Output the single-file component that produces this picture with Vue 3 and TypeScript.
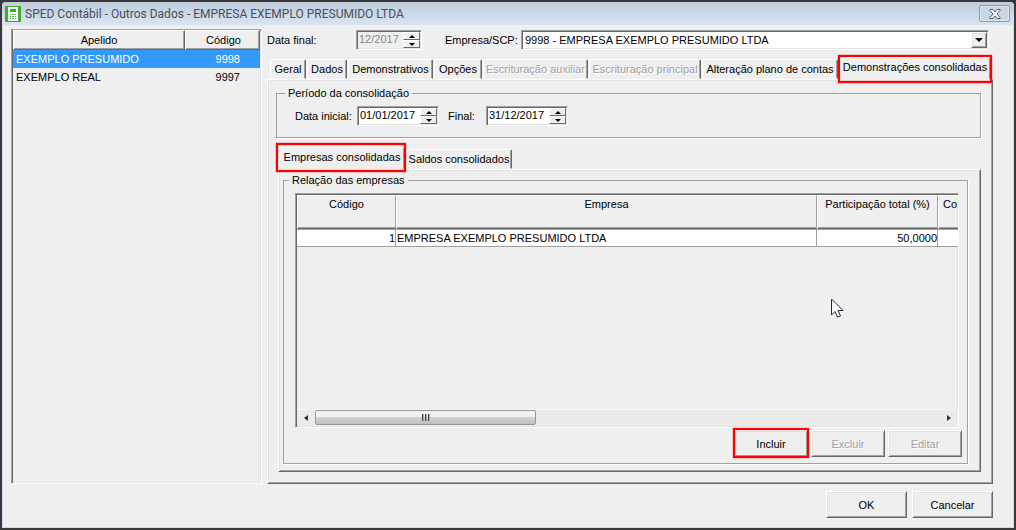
<script setup lang="ts">
import { ref } from 'vue'

interface Company { alias: string; code: number }
interface Tab { id: string; label: string; disabled?: boolean }

const companies: Company[] = [
  { alias: 'EXEMPLO PRESUMIDO', code: 9998 },
  { alias: 'EXEMPLO REAL', code: 9997 },
]
const selected = ref(9998)

const tabs: Tab[] = [
  { id: 'geral', label: 'Geral' },
  { id: 'dados', label: 'Dados' },
  { id: 'demonstrativos', label: 'Demonstrativos' },
  { id: 'opcoes', label: 'Opções' },
  { id: 'auxiliar', label: 'Escrituração auxiliar', disabled: true },
  { id: 'principal', label: 'Escrituração principal', disabled: true },
  { id: 'plano', label: 'Alteração plano de contas' },
  { id: 'consolidadas', label: 'Demonstrações consolidadas' },
]
const activeTab = ref('consolidadas')

const subTabs: Tab[] = [
  { id: 'empresas', label: 'Empresas consolidadas' },
  { id: 'saldos', label: 'Saldos consolidados' },
]
const activeSubTab = ref('empresas')

const finalMonth = ref('12/2017')
const startDate = ref('01/01/2017')
const endDate = ref('31/12/2017')
</script>

<template>
  <div class="window">
    <header class="titlebar">
      <svg class="app-icon" width="16" height="16" viewBox="0 0 16 16" aria-hidden="true">
        <rect width="16" height="16" fill="#3fae2a" />
        <path d="M3 1h10v14H3z" fill="#fff" />
        <path d="M5 3h6v3H5zM5 8h1v1H5zM7 8h2v1H7zM10 8h1v1h-1zM5 10h1v1H5zM7 10h2v1H7zM10 10h1v1h-1zM5 12h1v1H5zM7 12h2v1H7zM10 12h1v1h-1z" fill="#3fae2a" />
      </svg>
      <h1>SPED Contábil - Outros Dados - EMPRESA EXEMPLO PRESUMIDO LTDA</h1>
      <button class="close" type="button" aria-label="Fechar">
        <svg width="12" height="10" viewBox="0 0 12 10" aria-hidden="true">
          <path d="M1 .5h3L6 3l2-2.500h3v1L8 5l3 3.500v1H8L6 7l-2 2.500H1v-1L4 5 1 1.500z" fill="#fff" stroke="#555b66" />
        </svg>
      </button>
    </header>

    <div class="content">
      <aside class="company-list sunken">
        <table>
          <thead>
            <tr><th class="alias-col">Apelido</th><th class="code-col">Código</th></tr>
          </thead>
          <tbody>
            <tr v-for="c in companies" :key="c.code" :class="{ current: c.code === selected }" @click="selected = c.code">
              <td>{{ c.alias }}</td><td class="code">{{ c.code }}</td>
            </tr>
          </tbody>
        </table>
      </aside>

      <main class="main">
        <div class="filters">
          <label class="month-label" for="final-month">Data final:</label>
          <span class="spin sunken month">
            <input id="final-month" v-model="finalMonth" type="text" disabled />
            <span class="arrows">
              <button type="button" aria-label="Próximo mês"><i class="up"></i></button>
              <button type="button" aria-label="Mês anterior"><i class="down"></i></button>
            </span>
          </span>
          <label class="company-label" for="company">Empresa/SCP:</label>
          <span class="combo sunken">
            <select id="company"><option>9998 - EMPRESA EXEMPLO PRESUMIDO LTDA</option></select>
            <span class="combo-arrow raised"><i class="down"></i></span>
          </span>
        </div>

        <div class="tabs top" role="tablist">
          <button
            v-for="t in tabs" :key="t.id" class="tab" type="button" role="tab"
            :class="{ active: t.id === activeTab, marked: t.id === 'consolidadas' }"
            :aria-selected="t.id === activeTab" :disabled="t.disabled" @click="activeTab = t.id"
          >{{ t.label }}</button>
        </div>

        <section class="panel raised outer">
          <fieldset class="period">
            <legend>Período da consolidação</legend>
            <label for="start">Data inicial:</label>
            <span class="spin sunken">
              <input id="start" v-model="startDate" type="text" />
              <span class="arrows">
                <button type="button" aria-label="Avançar data inicial"><i class="up"></i></button>
                <button type="button" aria-label="Recuar data inicial"><i class="down"></i></button>
              </span>
            </span>
            <label class="end-label" for="end">Final:</label>
            <span class="spin sunken">
              <input id="end" v-model="endDate" type="text" />
              <span class="arrows">
                <button type="button" aria-label="Avançar data final"><i class="up"></i></button>
                <button type="button" aria-label="Recuar data final"><i class="down"></i></button>
              </span>
            </span>
          </fieldset>

          <div class="tabs sub" role="tablist">
            <button
              v-for="t in subTabs" :key="t.id" class="tab" type="button" role="tab"
              :class="{ active: t.id === activeSubTab, marked: t.id === 'empresas' }"
              :aria-selected="t.id === activeSubTab" @click="activeSubTab = t.id"
            >{{ t.label }}</button>
          </div>

          <section class="panel raised inner">
            <fieldset class="relation">
              <legend>Relação das empresas</legend>
              <div class="relation-body">
                <div class="grid sunken">
                  <div class="grid-view">
                    <table>
                      <colgroup><col class="c-code" /><col /><col class="c-share" /><col class="c-last" /></colgroup>
                      <thead>
                        <tr><th>Código</th><th>Empresa</th><th>Participação total (%)</th><th class="cut">Co</th></tr>
                      </thead>
                      <tbody>
                        <tr><td class="num">1</td><td>EMPRESA EXEMPLO PRESUMIDO LTDA</td><td class="num">50,0000</td><td></td></tr>
                      </tbody>
                    </table>
                  </div>
                  <div class="scrollbar">
                    <button type="button" aria-label="Rolar para a esquerda">
                      <svg width="4" height="6" viewBox="0 0 4 6"><path d="M4 0v6L0 3z" fill="#333" /></svg>
                    </button>
                    <div class="track"><div class="thumb"><b></b><b></b><b></b></div></div>
                    <button type="button" aria-label="Rolar para a direita">
                      <svg width="4" height="6" viewBox="0 0 4 6"><path d="M0 0v6l4-3z" fill="#333" /></svg>
                    </button>
                  </div>
                </div>
                <div class="actions">
                  <button class="btn raised marked" type="button">Incluir</button>
                  <button class="btn raised" type="button" disabled>Excluir</button>
                  <button class="btn raised" type="button" disabled>Editar</button>
                </div>
              </div>
            </fieldset>
          </section>
        </section>
      </main>
    </div>

    <footer class="footer">
      <button class="btn raised" type="button">OK</button>
      <button class="btn raised" type="button">Cancelar</button>
    </footer>

    <svg class="pointer" width="13" height="20" viewBox="0 0 13 20" aria-hidden="true">
      <path d="M.5 1v16l3.500-3.500L6.500 19l3-1-2.500-5.500H12z" fill="#fff" stroke="#26263f" />
    </svg>
  </div>
</template>

<style>
body { margin: 0; background: #3b3839; }
</style>

<style scoped>
* { box-sizing: border-box; }
.window {
  position: relative;
  display: flex;
  flex-direction: column;
  min-height: 100vh;
  border: 2px solid #3b3839;
  background: #efefef;
  box-shadow: inset 0 0 0 1px #cfdff0;
  border-radius: 6px 6px 0 0;
  overflow: hidden;
  color: #000;
  font: 11px/14px "Liberation Sans", Arial, sans-serif;
}
button, input, select { font: inherit; color: inherit; margin: 0; padding: 0; border-radius: 0; }
button { background: #efefef; border: 0; }
label { white-space: nowrap; }
i { display: block; width: 0; height: 0; border: 3px solid transparent; }
i.up { border-top: 0; border-bottom-color: #000; }
i.down { border-bottom: 0; border-top-color: #000; }

.raised {
  border: 1px solid;
  border-color: #fff #696969 #696969 #fff;
  box-shadow: inset 1px 1px #e3e3e3, inset -1px -1px #a0a0a0;
}
.sunken {
  border: 1px solid;
  border-color: #a0a0a0 #fff #fff #a0a0a0;
  box-shadow: inset 1px 1px #696969, inset -1px -1px #e3e3e3;
}

.titlebar {
  display: flex;
  align-items: center;
  height: 23px;
  padding: 0 4px 0 3px;
  background: linear-gradient(#becbda, #d8e6f4);
}
h1 {
  flex: 1;
  margin: 0 0 0 4px;
  font: 12px/18px "Roboto", "Open Sans", sans-serif;
  color: #4a4f58;
  white-space: nowrap;
}
.close {
  display: grid;
  place-items: center;
  width: 31px;
  height: 17px;
  border: 1px solid #8e99aa;
  border-radius: 2px;
  background: #c9d6e4;
  box-shadow: inset 0 0 0 1px #dbe5ef;
}

.content { flex: 1; display: flex; gap: 5px; padding: 4px 21px 0 9px; }
.company-list { width: 251px; padding: 0 1px 1px 1px; }
.company-list table { width: 100%; border-collapse: separate; border-spacing: 0; }
.company-list th {
  height: 20px;
  padding: 0;
  font-weight: 400;
  border: 1px solid;
  border-color: #fff #696969 #696969 #fff;
  box-shadow: inset -1px -1px #a0a0a0;
}
.company-list .alias-col { width: 172px; }
.company-list .code-col { padding-left: 2px; }
.company-list td { height: 18px; padding: 0 3px; }
.company-list .code { padding-right: 20px; text-align: right; }
.current { background: #3399ff; color: #fff; }

.main { flex: 1; min-width: 0; display: flex; flex-direction: column; }
.filters { display: flex; align-items: center; height: 22px; padding-right: 4px; }
.month-label { width: 89px; }
.company-label { width: 76px; margin-left: 23px; }
.spin { display: flex; width: 82px; height: 20px; padding: 1px; background: #fff; }
.spin.month { width: 66px; background: #efefef; }
.spin input { flex: 1; min-width: 0; border: 0; padding: 0 0 2px 1px; background: transparent; outline: 0; }
.spin input:disabled { color: #868686; }
.arrows { display: flex; flex-direction: column; width: 17px; }
.arrows button {
  flex: 1;
  display: grid;
  place-items: center;
  border: 1px solid;
  border-color: #fff #696969 #696969 #fff;
}
.combo { position: relative; flex: 1; height: 20px; background: #fff; }
.combo select { width: 100%; height: 18px; padding: 0 3px; border: 0; background: transparent; appearance: none; outline: 0; }
.combo-arrow {
  position: absolute;
  top: 1px;
  right: 1px;
  display: grid;
  place-items: center;
  width: 16px;
  height: 16px;
  background: #efefef;
  pointer-events: none;
}
.combo-arrow i { border-width: 4px 4px 0; }

.tabs { display: grid; align-items: end; }
.tabs.top {
  height: 28px;
  padding-left: 3px;
  grid-template-columns: 37px 41px 86px 49px 106px 113px 137px 153px;
}
.tabs.sub { height: 31px; padding-left: 3px; grid-template-columns: 127px 107px; }
.tab {
  position: relative;
  height: 20px;
  margin-right: 1px;
  white-space: nowrap;
  border: 1px solid;
  border-color: #fff #696969 transparent #fff;
  border-radius: 2px 2px 0 0;
  box-shadow: inset -1px 0 #a0a0a0;
}
.tab:disabled, .btn:disabled { color: #a0a0a0; text-shadow: 1px 1px #fff; }
.tab.active { z-index: 1; height: 23px; margin-bottom: -1px; padding-bottom: 3px; border-bottom-color: #efefef; }
.marked { position: relative; }
.marked::after {
  content: "";
  position: absolute;
  inset: -3px -2px -4px;
  border: 2px solid #f00;
  box-shadow: 0 0 1px #f00, inset 0 0 1px #f00;
  pointer-events: none;
}
.sub .marked::after { inset: -5px -2px -3px -4px; }
.panel { flex: 1; display: flex; flex-direction: column; }
.outer { padding: 6px 11px 11px 8px; }
.inner { margin-left: 2px; padding: 3px 12px 7px 4px; }

fieldset {
  min-width: 0;
  margin: 0;
  border: 1px solid #a0a0a0;
  box-shadow: 1px 1px #fff;
}
legend { padding: 0 3px; }
.period { display: flex; align-items: center; height: 52px; padding: 6px 18px 0; }
.period legend { margin-left: -10px; }
.period label { width: 62px; }
.period .end-label { width: 38px; margin-left: 9px; }

.relation { flex: 1; padding: 0 5px 6px 11px; }
.relation legend { margin-left: -6px; }
.relation-body { display: flex; flex-direction: column; height: 100%; }
.grid { flex: 1; display: flex; flex-direction: column; margin: 6px 3px 0 0; padding: 1px 0 1px 1px; overflow: hidden; }
.grid-view { flex: 1; overflow: hidden; }
.grid table { width: 100%; table-layout: fixed; border-collapse: separate; border-spacing: 0; }
.c-code { width: 99px; }
.c-share { width: 121px; }
.c-last { width: 20px; }
.grid th {
  height: 34px;
  padding: 1px 0;
  font-weight: 400;
  vertical-align: top;
  border: 1px solid;
  border-color: #fff #a0a0a0 #696969 #fff;
  box-shadow: inset 0 -1px #a0a0a0;
}
.grid .cut { padding-left: 4px; text-align: left; border-right: 0; }
.grid td {
  height: 18px;
  padding: 0 0 0 1px;
  background: #fff;
  border-style: solid;
  border-color: #a0a0a0;
  border-width: 1px 1px 1px 0;
  white-space: nowrap;
}
.grid td:last-child { border-right: 0; }
.grid .num { text-align: right; }
.scrollbar { display: flex; height: 17px; background: #ebebeb; border-top: 1px solid #f8f8f8; }
.scrollbar button { display: grid; place-items: center; width: 18px; background: transparent; }
.track { flex: 1; }
.thumb {
  display: flex;
  align-items: center;
  justify-content: center;
  gap: 1px;
  width: 221px;
  height: 15px;
  border: 1px solid #979797;
  border-radius: 2px;
  background: linear-gradient(#f2f2f2 0 45%, #d5d5d8 45%, #bfbfc4);
}
.thumb b { width: 2px; height: 7px; background: linear-gradient(90deg, #444 50%, #aaa 50%); }
.actions { display: flex; justify-content: flex-end; gap: 3px; margin-top: 2px; }
.btn { width: 81px; height: 27px; }
.actions .btn { width: 74px; }
.actions .marked::after { inset: -3px -2px -2px; }
.footer { display: flex; justify-content: flex-end; gap: 5px; padding: 7px 21px 10px; }
.pointer { position: absolute; left: 829px; top: 296px; }
</style>
